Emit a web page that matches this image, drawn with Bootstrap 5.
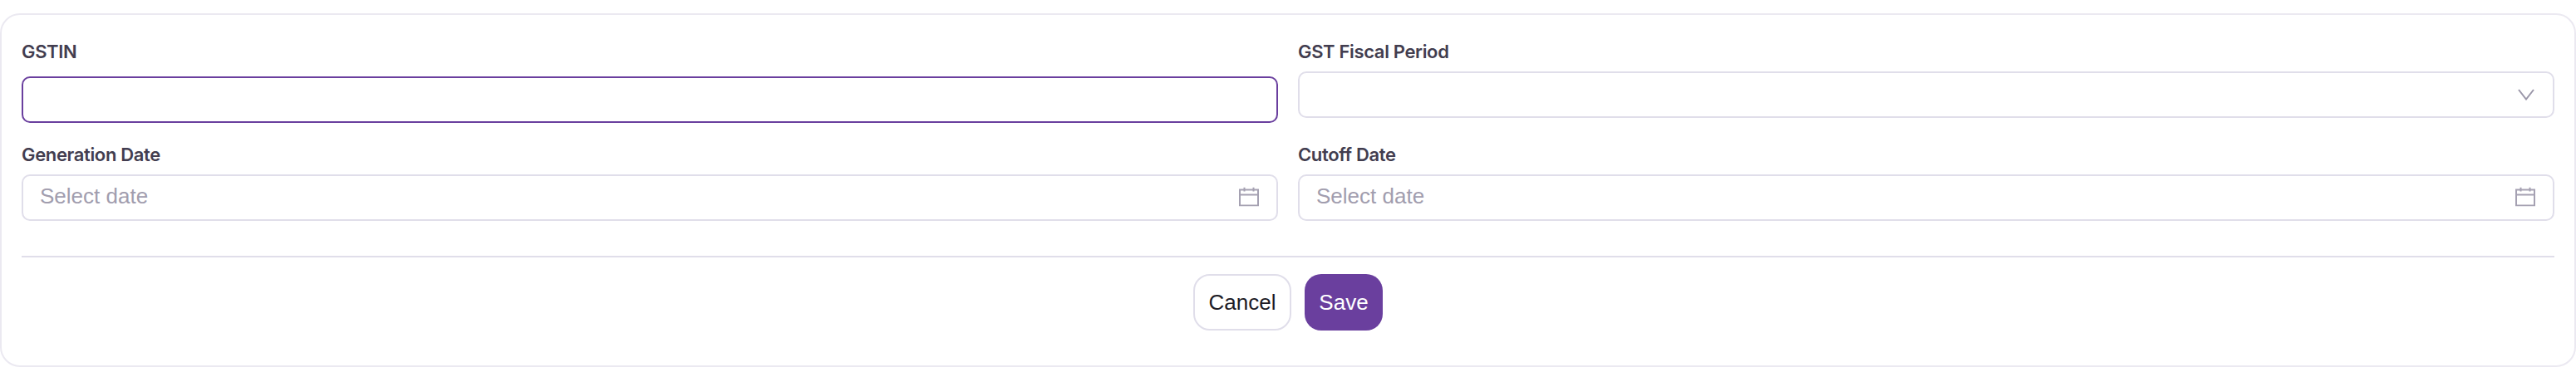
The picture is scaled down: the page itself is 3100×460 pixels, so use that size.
<!doctype html>
<html lang="en">
<head>
<meta charset="utf-8">
<title>GST form</title>
<link href="https://cdn.jsdelivr.net/npm/bootstrap@5.3.0/dist/css/bootstrap.min.css" rel="stylesheet">
<style>
body { background:#fff; font-family:Inter,"Liberation Sans",sans-serif; padding-top:16px; }
.gst-card { height:426px; border:2px solid #ebe9f1; border-radius:24px; padding:28px 24px 0; background:#fff; }
.gst-label { display:block; font-size:22px; font-weight:600; line-height:32px; letter-spacing:-0.35px; color:#423d4f; margin-bottom:8px; }
.gst-label-focus { margin-bottom:14px; }
.gst-field { height:56px; border:2px solid #e0deea; border-radius:10px; padding:0 20px 4px; font-family:"Liberation Sans",sans-serif; font-size:26px; color:#3b3648; background:#fff; }
.gst-field::placeholder { color:#a19dae; opacity:1; }
.gst-focus { border-color:#6a3f9e; margin-bottom:-6px; }
.gst-cell { margin-bottom:28px; }
.gst-ico { position:absolute; right:23px; top:50%; transform:translateY(-50%); }
.gst-ico-chev { right:24px; }
.gst-ico-cal { margin-top:-1px; }
.gst-rule { height:2px; background:#e0deea; margin:42px 0 20px; }
.gst-btn { height:68px; border-radius:20px; font-family:"Liberation Sans",sans-serif; font-size:26px; line-height:1; padding:0; }
.gst-cancel { width:118px; border:2px solid #e0deea; background:#fff; color:#1d1b26; }
.gst-save { width:94px; border:0; background:#6a3f9e; color:#fff; }
</style>
</head>
<body>
<form class="gst-card">
  <div class="row gx-4">
    <div class="col-6 gst-cell">
      <label class="gst-label gst-label-focus" for="a">GSTIN</label>
      <input id="a" class="form-control gst-field gst-focus" type="text">
    </div>
    <div class="col-6 gst-cell">
      <label class="gst-label" for="b">GST Fiscal Period</label>
      <div class="position-relative">
        <input id="b" class="form-control gst-field" type="text">
        <svg class="gst-ico gst-ico-chev" width="20" height="14" viewBox="0 0 20 14" fill="none" stroke="#9a96a8" stroke-width="2"><path d="M1 1l9 11.500L19 1"/></svg>
      </div>
    </div>
    <div class="col-6">
      <label class="gst-label" for="c">Generation Date</label>
      <div class="position-relative">
        <input id="c" class="form-control gst-field" type="text" placeholder="Select date">
        <svg class="gst-ico gst-ico-cal" width="24" height="23" viewBox="0 0 24 23" fill="none" stroke="#a5a1b2" stroke-width="2"><path d="M1 3h22v19H1zM1 9h22M6.500 0v5M17.500 0v5"/></svg>
      </div>
    </div>
    <div class="col-6">
      <label class="gst-label" for="d">Cutoff Date</label>
      <div class="position-relative">
        <input id="d" class="form-control gst-field" type="text" placeholder="Select date">
        <svg class="gst-ico gst-ico-cal" width="24" height="23" viewBox="0 0 24 23" fill="none" stroke="#a5a1b2" stroke-width="2"><path d="M1 3h22v19H1zM1 9h22M6.500 0v5M17.500 0v5"/></svg>
      </div>
    </div>
  </div>
  <div class="gst-rule"></div>
  <div class="d-flex justify-content-center gap-3">
    <button type="button" class="btn gst-btn gst-cancel">Cancel</button>
    <button type="button" class="btn gst-btn gst-save">Save</button>
  </div>
</form>
<script src="https://cdn.jsdelivr.net/npm/bootstrap@5.3.0/dist/js/bootstrap.bundle.min.js"></script>
</body>
</html>
